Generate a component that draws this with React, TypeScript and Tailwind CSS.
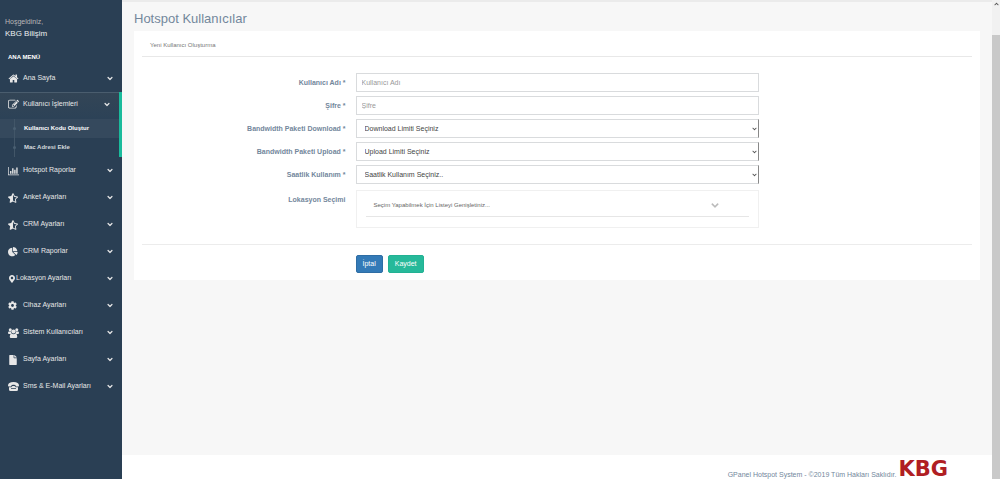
import { useState, type ReactNode } from 'react'
import { FaCog, FaFile, FaMapMarkerAlt, FaStarHalfAlt } from 'react-icons/fa'

interface IconProps {
  className?: string
}

const HomeIcon = () => (
  <svg viewBox="0 0 1792 1792" fill="currentColor" className="size-[11px]">
    <path d="M1472 992v480q0 26-19 45t-45 19h-384v-384h-256v384h-384q-26 0-45-19t-19-45v-480q0-1 .5-3t.5-3l575-474 575 474q1 2 1 6zm223-69l-62 74q-8 9-21 11h-3q-13 0-21-7l-692-577-692 577q-12 8-24 7-13-2-21-11l-62-74q-8-10-7-23.500t11-21.500l719-599q32-26 76-26t76 26l244 204v-195q0-14 9-23t23-9h192q14 0 23 9t9 23v408l219 182q10 8 11 21.500t-7 23.500z" />
  </svg>
)

const EditIcon = () => (
  <svg viewBox="0 0 1792 1792" fill="currentColor" className="size-[11px]">
    <path d="M888 1184l116-116-152-152-116 116v56h96v96h56zm440-720q-16-16-33 1l-350 350q-17 17-1 33t33-1l350-350q17-17 1-33zm80 594v190q0 119-84.500 203.500t-203.500 84.500h-832q-119 0-203.500-84.500t-84.500-203.500v-832q0-119 84.500-203.500t203.500-84.500h832q63 0 117 25 15 7 18 23 3 17-9 29l-49 49q-14 14-32 8-23-6-45-6h-832q-66 0-113 47t-47 113v832q0 66 47 113t113 47h832q66 0 113-47t47-113v-126q0-13 9-22l64-64q15-15 35-7t20 29zm-96-738l288 288-672 672h-288v-288zm444 132l-92 92-288-288 92-92q28-28 68-28t68 28l152 152q28 28 28 68t-28 68z" />
  </svg>
)

const ChartIcon = () => (
  <svg viewBox="0 0 2048 1792" fill="currentColor" className="h-[10px] w-[11px]">
    <path d="M640 896v512h-256v-512h256zm384-512v1024h-256v-1024h256zm1024 1152v128h-2048v-1536h128v1408h1920zm-640-896v768h-256v-768h256zm384-384v1152h-256v-1152h256z" />
  </svg>
)

const PieIcon = () => (
  <svg viewBox="0 0 1792 1792" fill="currentColor" className="size-[10px]">
    <path d="M768 890l546 546q-106 108-247.500 168t-298.500 60q-209 0-385.500-103t-279.500-279.500-103-385.500 103-385.500 279.500-279.500 385.500-103v762zm187 6h773q0 157-60 298.500t-168 247.500zm709-128h-768v-768q209 0 385.500 103t279.500 279.500 103 385.500z" />
  </svg>
)

const GroupIcon = () => (
  <svg viewBox="0 0 22 20" fill="currentColor" className="h-[10px] w-[11px]">
    <circle cx="4.500" cy="3.500" r="3" />
    <circle cx="17.500" cy="3.500" r="3" />
    <circle cx="11" cy="7" r="4.200" />
    <path d="M1.500 7h5q-1 3 1 5H2Q0 12 0 10q0-3 1.500-3zM20.500 7h-5q1 3-1 5H20q2 0 2-2 0-3-1.500-3z" />
    <path d="M7 11q4 2.500 8 0 3.500.5 3.500 6 0 3-2.500 3H6q-2.500 0-2.500-3 0-5.500 3.500-6z" />
  </svg>
)

const PhoneIcon = () => (
  <svg viewBox="0 0 22 18" fill="currentColor" className="h-[9px] w-[11px]">
    <path d="M0 7.500Q0 0 11 0t11 7.500q0 1.500-1.500 1.500h-4Q15 9 15 7.500V6q-4-1.500-8 0v1.500Q7 9 5.500 9h-4Q0 9 0 7.500z" />
    <path
      fillRule="evenodd"
      d="M2 10.500h4.500L9 8h4l2.500 2.500H20V15q0 3-3 3H5q-3 0-3-3zM6 12.500v1.500h10v-1.500z"
    />
  </svg>
)

function ChevronIcon({ className = '' }: IconProps) {
  return (
    <svg viewBox="0 300 1792 1500" fill="currentColor" className={className}>
      <path d="M1683 808l-742 741q-19 19-45 19t-45-19l-742-741q-19-19-19-45.500t19-45.500l166-165q19-19 45-19t45 19l531 531 531-531q19-19 45-19t45 19l166 165q19 19 19 45.500t-19 45.500z" />
    </svg>
  )
}

interface MenuItem {
  label: string
  icon: ReactNode
  compact?: boolean
  children?: string[]
}

const menu: MenuItem[] = [
  { label: 'Ana Sayfa', icon: <HomeIcon /> },
  {
    label: 'Kullanıcı İşlemleri',
    icon: <EditIcon />,
    children: ['Kullanıcı Kodu Oluştur', 'Mac Adresi Ekle'],
  },
  { label: 'Hotspot Raporlar', icon: <ChartIcon /> },
  { label: 'Anket Ayarları', icon: <FaStarHalfAlt size={10} /> },
  { label: 'CRM Ayarları', icon: <FaStarHalfAlt size={10} /> },
  { label: 'CRM Raporlar', icon: <PieIcon /> },
  { label: 'Lokasyon Ayarları', icon: <FaMapMarkerAlt size={8} />, compact: true },
  { label: 'Cihaz Ayarları', icon: <FaCog size={9} /> },
  { label: 'Sistem Kullanıcıları', icon: <GroupIcon /> },
  { label: 'Sayfa Ayarları', icon: <FaFile size={10} /> },
  { label: 'Sms & E-Mail Ayarları', icon: <PhoneIcon /> },
]

function MenuLink({ item }: { item: MenuItem }) {
  const open = Boolean(item.children)
  return (
    <li className={open ? 'border-r-[3px] border-[#1abb9c]' : ''}>
      <a
        href="#"
        className={
          open
            ? 'flex h-[27px] items-center border-t border-[#4a5d6e] bg-linear-to-b from-[#334556] to-[#2c4257] pb-1 pl-2 pr-[9px] text-[#e7e7e7]'
            : 'flex h-[27px] items-center pl-2 pr-[9px] text-[#e7e7e7]'
        }
      >
        <span className={item.compact ? 'w-2' : 'w-[15px]'}>{item.icon}</span>
        <span className="flex-1 whitespace-nowrap">{item.label}</span>
        <ChevronIcon className="h-[5px] w-[6px]" />
      </a>
      {item.children && (
        <ul className="text-[6px] leading-[19px] font-bold">
          {item.children.map((child, i) => (
            <li key={child} className={i === 0 ? 'bg-white/5' : ''}>
              <a
                href="#"
                className={
                  i === 0
                    ? 'flex items-center gap-2 pl-[13px] text-white'
                    : 'flex items-center gap-2 pl-[13px] text-[#d5dade]'
                }
              >
                <span className="flex w-[3px] justify-center self-stretch">
                  <span className="flex w-px items-center justify-center bg-[#425668]">
                    <span className="size-[3px] shrink-0 rounded-full bg-[#4a5f72]" />
                  </span>
                </span>
                {child}
              </a>
            </li>
          ))}
        </ul>
      )}
    </li>
  )
}

function Sidebar() {
  return (
    <aside className="w-[122px] shrink-0 bg-[#2a3f54] text-[7px]">
      <div className="px-[5px] pt-4 leading-3">
        <p className="text-[#bab8b8]">Hoşgeldiniz,</p>
        <h2 className="text-[8px] text-[#ecf0f1]">KBG Bilişim</h2>
      </div>
      <nav>
        <h3 className="mt-3 mb-[3px] px-2 text-[6px] leading-[10px] font-bold text-white">ANA MENÜ</h3>
        <ul>
          {menu.map((item) => (
            <MenuLink key={item.label} item={item} />
          ))}
        </ul>
      </nav>
    </aside>
  )
}

function Row({ label, htmlFor, children }: { label: string; htmlFor: string; children: ReactNode }) {
  return (
    <div className="grid grid-cols-4">
      <label htmlFor={htmlFor} className="px-1 text-right font-bold leading-[19px]">
        {label}
      </label>
      <div className="col-span-2 px-[6px]">{children}</div>
    </div>
  )
}

function TextField({ id, label, placeholder, type }: { id: string; label: string; placeholder: string; type: string }) {
  return (
    <Row label={label} htmlFor={id}>
      <input
        id={id}
        type={type}
        placeholder={placeholder}
        className="block h-[19px] w-full border border-[#d9dbdd] bg-white px-[5px] text-[#555] placeholder:text-[#999]"
      />
    </Row>
  )
}

function SelectField({ id, label, option }: { id: string; label: string; option: string }) {
  return (
    <Row label={label} htmlFor={id}>
      <div className="relative">
        <select
          id={id}
          className="block h-[19px] w-full appearance-none border border-[#d9dbdd] border-r-[#888] bg-white px-2 pt-px text-[#444]"
        >
          <option>{option}</option>
        </select>
        <ChevronIcon className="pointer-events-none absolute top-2 right-[2px] h-1 w-[5px] text-[#555]" />
      </div>
    </Row>
  )
}

function UserForm() {
  const [expanded, setExpanded] = useState(false)
  return (
    <form onSubmit={(e) => e.preventDefault()}>
      <div className="flex flex-col gap-1 pt-4">
        <TextField id="username" type="text" label="Kullanıcı Adı *" placeholder="Kullanıcı Adı" />
        <TextField id="password" type="password" label="Şifre *" placeholder="Şifre" />
        <SelectField id="download" label="Bandwidth Paketi Download *" option="Download Limiti Seçiniz" />
        <SelectField id="upload" label="Bandwidth Paketi Upload *" option="Upload Limiti Seçiniz" />
        <SelectField id="hours" label="Saatlik Kullanım *" option="Saatlik Kullanım Seçiniz.." />
        <div className="pt-[2px]">
          <Row label="Lokasyon Seçimi" htmlFor="locations">
            <div className="border border-[#f0f0f0] px-[9px] pt-1 pb-[10px]">
              <button
                id="locations"
                type="button"
                aria-expanded={expanded}
                onClick={() => setExpanded(!expanded)}
                className="flex h-[22px] w-full items-center justify-between border-b border-[#e6e6e6] pr-[30px] pl-2 text-[6px] text-[#666]"
              >
                Seçim Yapabilmek İçin Listeyi Genişletiniz...
                <ChevronIcon className="h-[7px] w-2 text-[#bbb]" />
              </button>
            </div>
          </Row>
        </div>
      </div>
      <hr className="mt-4 mb-[10px] border-[#ececec]" />
      <div className="grid grid-cols-4">
        <div className="col-span-2 col-start-2 flex gap-[5px] px-[6px] text-white">
          <button type="button" className="h-[18px] rounded-xs border border-[#2e6da4] bg-[#337ab7] px-[6px]">
            İptal
          </button>
          <button type="submit" className="h-[18px] rounded-xs border border-[#22b193] bg-[#26b99a] px-[6px]">
            Kaydet
          </button>
        </div>
      </div>
    </form>
  )
}

export default function App() {
  return (
    <div className="flex min-h-screen bg-[#f7f7f7] font-['Liberation_Sans',Arial,sans-serif] text-[7px] text-[#73879c]">
      <Sidebar />
      <div className="flex min-w-0 flex-1 flex-col border-t-2 border-[#ebebeb]">
        <main className="flex-1 pr-3 pl-3">
          <h1 className="pt-[9px] pb-1 text-[13px] leading-4">Hotspot Kullanıcılar</h1>
          <section className="bg-white px-2 pb-[7px]">
            <div className="flex h-[26px] items-center border-b border-[#e8e8e8] px-2 pt-1">
              <h2 className="text-[6px] text-[#777]">Yeni Kullanıcı Oluşturma</h2>
            </div>
            <UserForm />
          </section>
        </main>
        <footer className="flex h-6 items-end justify-end gap-[2px] bg-white pr-11">
          <p className="leading-2">GPanel Hotspot System - ©2019 Tüm Hakları Saklıdır.</p>
          <strong className="font-['DejaVu_Sans',sans-serif] text-[21px] leading-5 text-[#b01e23]">KBG</strong>
        </footer>
      </div>
      <div aria-hidden className="flex w-2 shrink-0 flex-col bg-[#f1f1f1]">
        <div className="flex h-[35px] justify-center pt-[2px]">
          <ChevronIcon className="h-1 w-[5px] rotate-180 text-[#555]" />
        </div>
        <div className="flex-1 bg-[#c9c9c9]" />
      </div>
    </div>
  )
}
